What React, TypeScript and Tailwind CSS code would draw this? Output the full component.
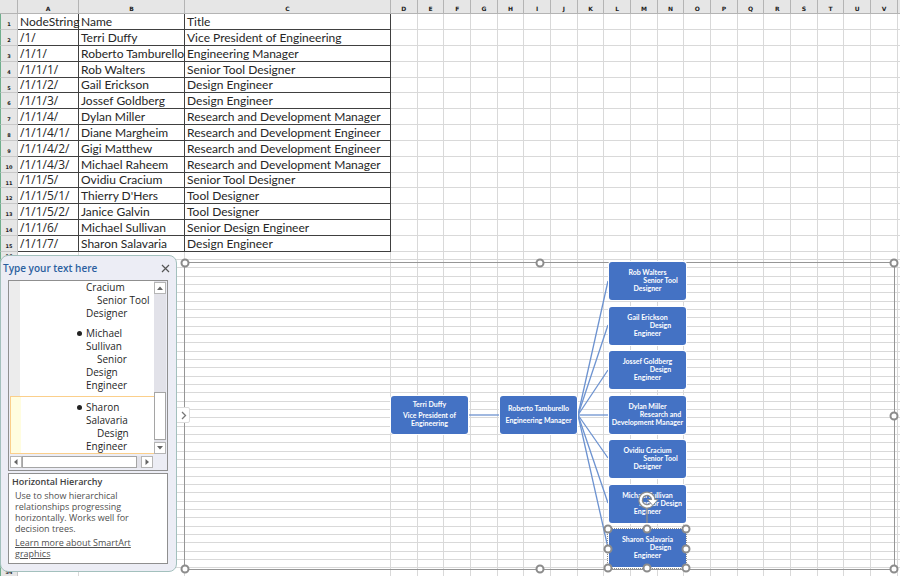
import { useState } from "react";
import { clsx } from "clsx";

const ROWS = [
  ["NodeString", "Name", "Title"],
  ["/1/", "Terri Duffy", "Vice President of Engineering"],
  ["/1/1/", "Roberto Tamburello", "Engineering Manager"],
  ["/1/1/1/", "Rob Walters", "Senior Tool Designer"],
  ["/1/1/2/", "Gail Erickson", "Design Engineer"],
  ["/1/1/3/", "Jossef Goldberg", "Design Engineer"],
  ["/1/1/4/", "Dylan Miller", "Research and Development Manager"],
  ["/1/1/4/1/", "Diane Margheim", "Research and Development Engineer"],
  ["/1/1/4/2/", "Gigi Matthew", "Research and Development Engineer"],
  ["/1/1/4/3/", "Michael Raheem", "Research and Development Manager"],
  ["/1/1/5/", "Ovidiu Cracium", "Senior Tool Designer"],
  ["/1/1/5/1/", "Thierry D'Hers", "Tool Designer"],
  ["/1/1/5/2/", "Janice Galvin", "Tool Designer"],
  ["/1/1/6/", "Michael Sullivan", "Senior Design Engineer"],
  ["/1/1/7/", "Sharon Salavaria", "Design Engineer"],
];

const LETTERS = "DEFGHIJKLMNOPQRSTUV".split("");
const EMPTY_ROWS = Array.from({ length: 39 }, (_, i) => i + 16);

// name, indented line, last line, position on the canvas
const LEAVES = [
  { name: "Rob Walters", mid: "Senior Tool", last: "Designer", pos: "top-0" },
  { name: "Gail Erickson", mid: "Design", last: "Engineer", pos: "top-[45px]" },
  { name: "Jossef Goldberg", mid: "Design", last: "Engineer", pos: "top-[89px]" },
  { name: "Dylan Miller", mid: "Research and", last: "Development Manager", pos: "top-[134px]" },
  { name: "Ovidiu Cracium", mid: "Senior Tool", last: "Designer", pos: "top-[178px]" },
  { name: "Michael Sullivan", mid: "Senior Design", last: "Engineer", pos: "top-[223px]" },
  { name: "Sharon Salavaria", mid: "Design", last: "Engineer", pos: "top-[267px]" },
];

const LEAF_CENTERS = [19, 63, 108, 153, 196, 241, 286];

const NODE =
  "absolute flex h-[38px] w-[77px] flex-col items-center justify-center rounded-[3px] bg-[#4472c4] pb-[3px] text-center text-[7px] leading-[8px] font-bold whitespace-nowrap text-white ring-1 ring-white";

function Handle({ className }: { className: string }) {
  return (
    <span
      className={clsx(
        "absolute size-[9px] -translate-x-1/2 -translate-y-1/2 rounded-full border-2 border-[#8c8c8c] bg-white",
        className,
      )}
    />
  );
}

function Sheet() {
  return (
    <table className="w-full table-fixed border-separate border-spacing-0 bg-white">
      <colgroup>
        <col className="w-[18px]" />
        <col className="w-[61px]" />
        <col className="w-[106px]" />
        <col className="w-[206px]" />
        {LETTERS.map((l) => (
          <col key={l} />
        ))}
        <col className="w-[2px]" />
      </colgroup>
      <thead>
        <tr className="h-[14px] bg-[#e6e6e6] text-[6px] leading-[8px] font-bold text-[#222]">
          <th className="border-r border-b border-[#b4b4b4] p-0" />
          {["A", "B", "C", ...LETTERS].map((l) => (
            <th key={l} scope="col" className="border-r border-b border-[#b4b4b4] p-0 pt-[5px] font-['DejaVu_Sans',sans-serif]">
              {l}
            </th>
          ))}
          <th className="border-b border-[#b4b4b4] p-0" />
        </tr>
      </thead>
      <tbody>
        {ROWS.map((row, i) => (
          <tr key={row[0]} className="h-4 nth-[6n+5]:h-[15px]">
            <th
              scope="row"
              className="border-r border-b border-l border-r-[#c4c4c4] border-b-[#c8c8c8] border-l-[#6fae8c] bg-[#e6e6e6] p-0 pt-[5px] text-center font-['DejaVu_Sans',sans-serif] text-[5px] leading-[8px] font-bold text-[#222]"
            >
              {i + 1}
            </th>
            {row.map((text) => (
              <td
                key={text}
                className={clsx(
                  "border-r border-b border-[#404040] p-0 pl-[2px] text-[12px] leading-[14px] whitespace-nowrap text-[#262626]",
                  text.startsWith("/") ? "font-['Open_Sans',sans-serif]" : "font-[Lato,sans-serif]",
                )}
              >
                {text}
              </td>
            ))}
            {LETTERS.map((l) => (
              <td key={l} className="border-r border-b border-[#d9d9d9] p-0" />
            ))}
            <td className="border-b border-[#d9d9d9] p-0" />
          </tr>
        ))}
        {EMPTY_ROWS.map((n) => (
          <tr key={n} className="h-2 nth-[3n]:h-[9px]">
            <th
              scope="row"
              className="border-r border-b border-l border-r-[#c4c4c4] border-b-[#c8c8c8] border-l-[#6fae8c] bg-[#e6e6e6] p-0 text-center font-['DejaVu_Sans',sans-serif] text-[5px] leading-[6px] font-bold text-[#222]"
            >
              {(n === 16 || n === 54) && n}
            </th>
            {["A", "B", "C", ...LETTERS].map((l) => (
              <td key={l} className="border-r border-b border-[#d9d9d9] p-0" />
            ))}
            <td className="border-b border-[#d9d9d9] p-0" />
          </tr>
        ))}
      </tbody>
    </table>
  );
}

function Diagram() {
  return (
    <section
      aria-label="Horizontal Hierarchy"
      className="absolute top-[262px] right-[5px] left-[184px] h-[308px] border border-[#969696] font-[Lato,sans-serif]"
    >
      {/* Origin of the drawing sits on the frame's top left corner */}
      <div className="absolute -top-px left-0">
        <svg width="520" height="310" className="absolute top-0 left-0" fill="none" stroke="#6c92d0" strokeWidth="1.3">
          <path d="M284 153H315" />
          {LEAF_CENTERS.map((y) => (
            <path key={y} d={`M393 153L423 ${y}`} />
          ))}
        </svg>
        <div className={clsx(NODE, "top-[134px] left-[206px]")}>
          <p>Terri Duffy</p>
          <p className="mt-[3px]">Vice President of</p>
          <p>Engineering</p>
        </div>
        <div className={clsx(NODE, "top-[134px] left-[315px]")}>
          <p>Roberto Tamburello</p>
          <p className="mt-1">Engineering Manager</p>
        </div>
        {LEAVES.map((n) => (
          <div key={n.name} className={clsx(NODE, "left-[424px]", n.pos)}>
            <p>{n.name}</p>
            <p className="pl-[26px]">{n.mid}</p>
            <p>{n.last}</p>
          </div>
        ))}

        {/* Selected shape */}
        <div className="absolute top-[266px] left-[422px] h-[41px] w-[80px] border border-dotted border-[#8c8c8c]">
          <Handle className="top-0 left-0" />
          <Handle className="top-0 left-1/2" />
          <Handle className="top-0 left-full" />
          <Handle className="top-1/2 left-0" />
          <Handle className="top-1/2 left-full" />
          <Handle className="top-full left-0" />
          <Handle className="top-full left-1/2" />
          <Handle className="top-full left-full" />
        </div>
        <svg width="24" height="36" className="absolute top-[226px] left-[450px]" fill="none">
          <path d="M12 20V35" stroke="#8c8c8c" strokeWidth="1.3" />
          <path d="M16.5 16.5A6.3 6.3 0 1 1 18.3 12" stroke="#8c8c8c" strokeWidth="4.6" />
          <path d="M12.500 11.500H23L17.800 17.500Z" fill="#fff" stroke="#8c8c8c" strokeWidth="1" />
          <path d="M16.500 16.500A6.300 6.300 0 1 1 18.300 12" stroke="#fff" strokeWidth="2.200" />
        </svg>
      </div>

      <Handle className="top-0 left-0" />
      <Handle className="top-0 left-1/2" />
      <Handle className="top-0 left-full" />
      <Handle className="top-1/2 left-full" />
      <Handle className="top-full left-0" />
      <Handle className="top-full left-1/2" />
      <Handle className="top-full left-full" />
    </section>
  );
}

const SCROLL_BUTTON =
  "flex h-3 w-3 flex-none items-center justify-center border border-[#b5b5b5] bg-white";

function Arrow({ d }: { d: string }) {
  return (
    <svg width="8" height="8" viewBox="0 0 8 8" className="flex-none" aria-hidden="true">
      <path d={d} fill="#666" />
    </svg>
  );
}

function TextPane({ onClose }: { onClose: () => void }) {
  return (
    <aside className="absolute top-[255px] left-0 flex w-[177px] flex-col rounded-lg border border-[#a3c0bd] bg-[#ecedf5] pr-2 pb-[7px] pl-[7px] font-['Open_Sans',sans-serif]">
      <header className="-mr-[3px] -ml-[5px] flex h-6 items-center justify-between">
        <h2 className="text-[10px] leading-[14px] font-semibold whitespace-nowrap text-[#2b5f9f]">Type your text here</h2>
        <button type="button" aria-label="Close" onClick={onClose} className="flex size-3 items-center justify-center">
          <svg width="9" height="9" viewBox="0 0 9 9" aria-hidden="true">
            <path d="M1 1L8 8M8 1L1 8" stroke="#555" strokeWidth="1.2" />
          </svg>
        </button>
      </header>

      <div className="border border-[#8f8f8f] bg-[#ecedf5] px-px pb-[2px] text-[10px] leading-[13px] text-[#262626]">
        <div className="flex">
          <ul className="min-w-0 flex-1 bg-white">
            <li className="border-l-[10px] border-[#ececec] pb-[7px] pl-[66px]">
              Cracium
              <br />
              <span className="pl-[11px] whitespace-nowrap">Senior Tool</span>
              <br />
              Designer
            </li>
            <li className="relative border-l-[10px] border-[#ececec] pb-1 pl-[66px]">
              <span className="absolute top-[4px] left-[57px] size-[5px] rounded-full bg-[#222]" />
              Michael
              <br />
              Sullivan
              <br />
              <span className="pl-[11px]">Senior</span>
              <br />
              Design
              <br />
              Engineer
            </li>
            <li className="relative flex border border-r-0 border-[#fbcf8b]">
              <span className="w-[10px] flex-none bg-[#fffde0]" />
              <span className="absolute top-[8px] left-[66px] size-[5px] rounded-full bg-[#222]" />
              <p className="pt-1 pl-[65px]">
                Sharon
                <br />
                Salavaria
                <br />
                <span className="pl-[11px]">Design</span>
                <br />
                Engineer
              </p>
            </li>
          </ul>
          <div className="flex w-3 flex-none flex-col bg-[#e2e2e9] pt-px">
            <button type="button" aria-label="Scroll up" className={SCROLL_BUTTON}>
              <Arrow d="M1 6L4 2.500L7 6Z" />
            </button>
            <div className="flex flex-1 flex-col justify-end pb-[2px]">
              <div className="h-12 border border-[#a5a5a5] bg-white" />
            </div>
            <button type="button" aria-label="Scroll down" className={SCROLL_BUTTON}>
              <Arrow d="M1 2L4 5.500L7 2Z" />
            </button>
          </div>
        </div>
        <div className="mt-[2px] mr-[13px] flex h-3 bg-[#e2e2e9]">
          <button type="button" aria-label="Scroll left" className={SCROLL_BUTTON}>
            <Arrow d="M5.500 1L2 4L5.500 7Z" />
          </button>
          <div className="mr-1 flex-1 border border-[#a5a5a5] bg-white" />
          <button type="button" aria-label="Scroll right" className={SCROLL_BUTTON}>
            <Arrow d="M2.500 1L6 4L2.500 7Z" />
          </button>
        </div>
      </div>

      <div className="mt-[2px] border border-[#8f8f8f] bg-white pt-[2px] pb-1 pl-[3px] text-[9px] leading-[11px] text-[#505050]">
        <h3 className="font-semibold text-[#404040]">Horizontal Hierarchy</h3>
        <p className="mt-[3px] pl-[3px] whitespace-nowrap">
          Use to show hierarchical
          <br />
          relationships progressing
          <br />
          horizontally. Works well for
          <br />
          decision trees.
        </p>
        <a href="#smartart" className="mt-[3px] block pl-[3px] whitespace-nowrap underline">
          Learn more about SmartArt
          <br />
          graphics
        </a>
      </div>
    </aside>
  );
}

export default function App() {
  const [paneOpen, setPaneOpen] = useState(true);

  return (
    <main className="relative h-screen overflow-hidden bg-white font-['Open_Sans',sans-serif]">
      <Sheet />
      <Diagram />
      <button
        type="button"
        aria-label="Toggle text pane"
        onClick={() => setPaneOpen(!paneOpen)}
        className="absolute top-[407px] left-[176px] flex h-4 w-[14px] items-center justify-center rounded-r-[2px] border border-[#dcdcdc] bg-white"
      >
        <svg width="7" height="9" viewBox="0 0 7 9" fill="none" aria-hidden="true">
          <path d="M2 1L5.500 4.500L2 8" stroke="#777" strokeWidth="1.3" />
        </svg>
      </button>
      {paneOpen && <TextPane onClose={() => setPaneOpen(false)} />}
    </main>
  );
}
